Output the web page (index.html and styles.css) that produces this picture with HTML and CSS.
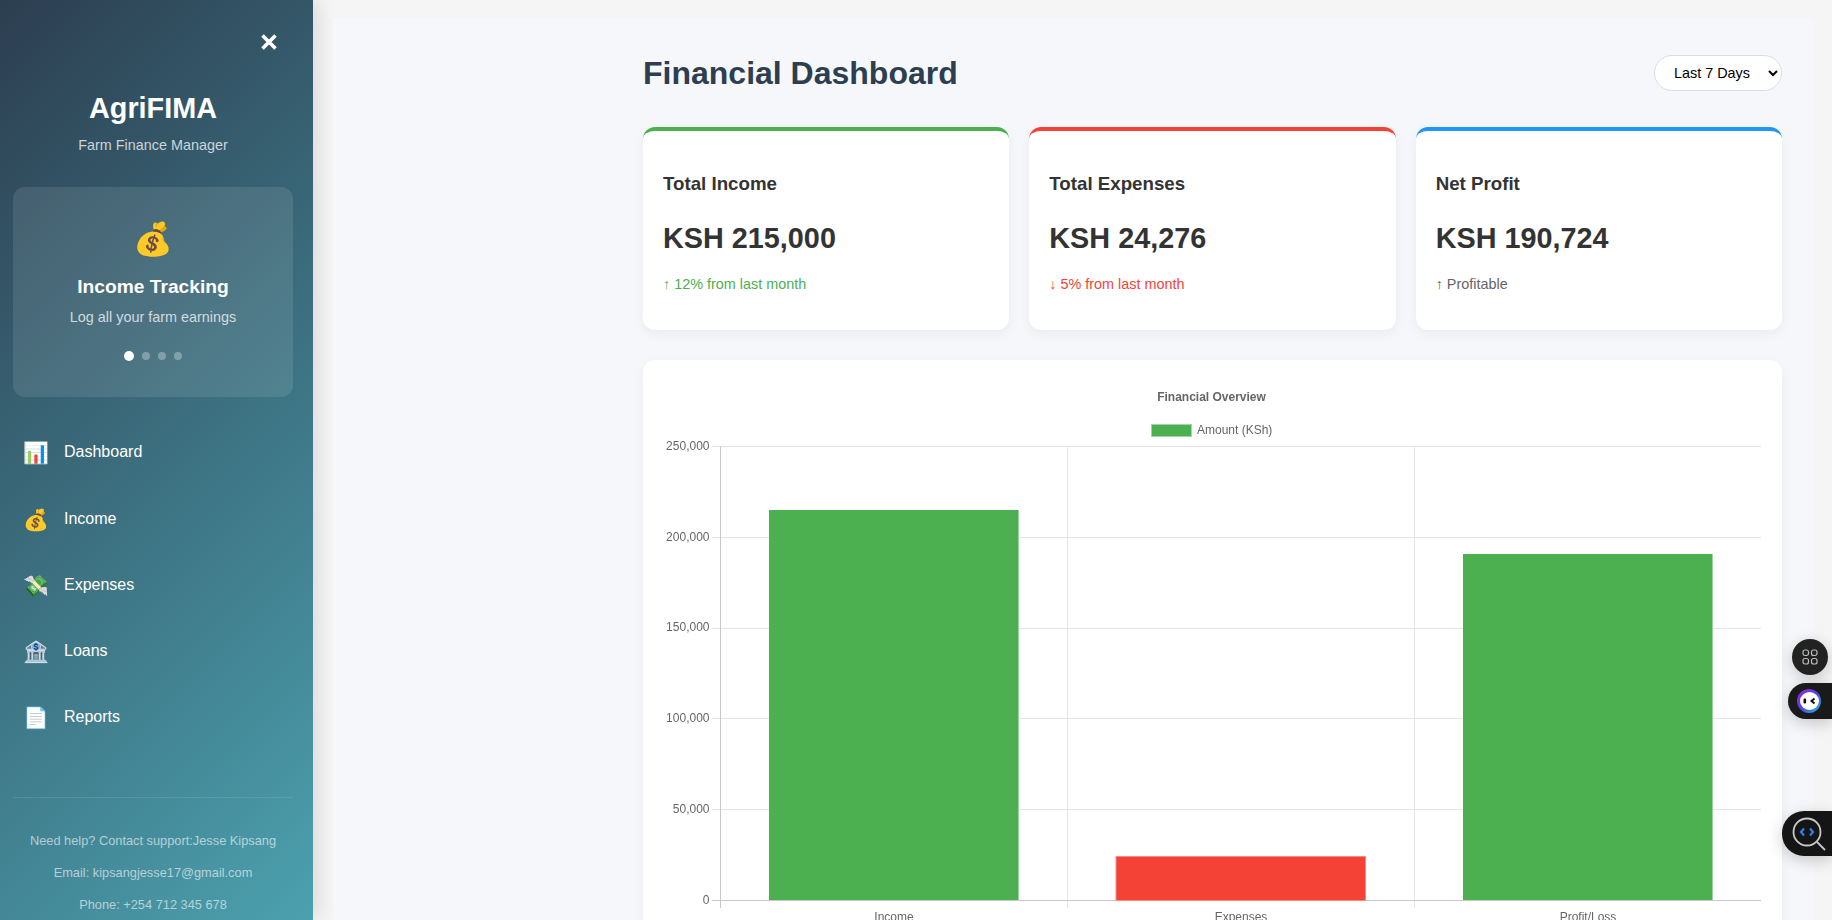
FILE: index.html
```html
<!DOCTYPE html>
<html lang="en">
<head>
<meta charset="utf-8">
<title>AgriFIMA</title>
<link rel="stylesheet" href="styles.css">
</head>
<body>
<div class="app">
  <aside class="sidebar">
    <div class="close-row"><svg class="close" width="16" height="16" viewBox="0 0 16 16"><path d="M1.5 1.5L14.5 14.5M14.5 1.5L1.5 14.5"/></svg></div>
    <header class="brand">
      <h1>AgriFIMA</h1>
      <p>Farm Finance Manager</p>
    </header>
    <section class="promo">
      <div class="promo-icon">💰</div>
      <h3>Income Tracking</h3>
      <p>Log all your farm earnings</p>
      <div class="dots"><span class="dot on"></span><span class="dot"></span><span class="dot"></span><span class="dot"></span></div>
    </section>
    <nav class="nav">
      <a class="nav-item"><span class="nav-icon">📊</span><span>Dashboard</span></a>
      <a class="nav-item"><span class="nav-icon">💰</span><span>Income</span></a>
      <a class="nav-item"><span class="nav-icon">💸</span><span>Expenses</span></a>
      <a class="nav-item"><span class="nav-icon">🏦</span><span>Loans</span></a>
      <a class="nav-item"><span class="nav-icon">📄</span><span>Reports</span></a>
    </nav>
    <footer class="side-foot">
      <p>Need help? Contact support:Jesse Kipsang</p>
      <p>Email: kipsangjesse17@gmail.com</p>
      <p>Phone: +254 712 345 678</p>
    </footer>
  </aside>
  <main class="panel">
    <div class="head">
      <h2>Financial Dashboard</h2>
      <select class="range"><option>Last 7 Days</option></select>
    </div>
    <div class="cards">
      <article class="card c-green"><h4>Total Income</h4><div class="amount">KSH 215,000</div><div class="delta up">↑ 12% from last month</div></article>
      <article class="card c-red"><h4>Total Expenses</h4><div class="amount">KSH 24,276</div><div class="delta down">↓ 5% from last month</div></article>
      <article class="card c-blue"><h4>Net Profit</h4><div class="amount">KSH 190,724</div><div class="delta flat">↑ Profitable</div></article>
    </div>
    <section class="chart-card">
      <svg class="chart" width="1139" height="560" viewBox="643 360 1139 560">
        <text class="ch-title" x="1211.5" y="401">Financial Overview</text>
        <rect class="swatch" x="1151.5" y="424.5" width="40" height="12"/>
        <text class="ch-legend" x="1197" y="434">Amount (KSh)</text>
        <g class="grid">
          <path d="M712 446.5H1761M712 537.5H1761M712 628.5H1761M712 718.5H1761M712 809.5H1761"/>
          <path d="M1067.5 446V908M1414.5 446V908"/>
        </g>
        <g class="axis"><path d="M720.5 446V908M712 900.5H1761"/></g>
        <rect class="bar-g" x="769" y="510" width="250" height="390"/>
        <path class="edge-g" d="M1018.5 510V900"/>
        <rect class="bar-r" x="1116" y="856.5" width="249.5" height="44"/>
        <rect class="bar-g" x="1463" y="554" width="250" height="346"/>
        <path class="edge-g" d="M1712.5 554V900"/>
        <g class="ch-y">
          <text x="709.5" y="450">250,000</text>
          <text x="709.5" y="541">200,000</text>
          <text x="709.5" y="631">150,000</text>
          <text x="709.5" y="722">100,000</text>
          <text x="709.5" y="813">50,000</text>
          <text x="709.5" y="904">0</text>
        </g>
        <g class="ch-x">
          <text x="894" y="921">Income</text>
          <text x="1241" y="921">Expenses</text>
          <text x="1588" y="921">Profit/Loss</text>
        </g>
      </svg>
    </section>
  </main>
</div>
<div class="float f-apps">
  <svg width="16" height="16" viewBox="0 0 16 16" fill="none" stroke="#bdbdbd" stroke-width="1.2"><rect x="1" y="1" width="5.5" height="5.5" rx="2"/><rect x="9.5" y="1" width="5.5" height="5.5" rx="2"/><rect x="1" y="9.5" width="5.5" height="5.5" rx="2"/><rect x="9.5" y="9.5" width="5.5" height="5.5" rx="2"/></svg>
</div>
<div class="float f-bot">
  <svg width="24" height="24" viewBox="0 0 24 24"><defs><linearGradient id="bot" x1="0" y1="0" x2="1" y2="1"><stop offset="0" stop-color="#a020e0"/><stop offset=".5" stop-color="#4f46e5"/><stop offset="1" stop-color="#1fc0e0"/></linearGradient></defs><circle cx="12" cy="12" r="12" fill="url(#bot)"/><ellipse cx="12.5" cy="12" rx="9.5" ry="9" fill="#fff"/><rect x="6.5" y="9.5" width="2.6" height="5" rx="1" fill="#111"/><path d="M17.5 9.5L14.5 12L17.5 14.5" fill="none" stroke="#111" stroke-width="2"/></svg>
</div>
<div class="float f-code">
  <svg width="36" height="36" viewBox="0 0 36 36" fill="none"><circle cx="15" cy="16" r="13.5" stroke="#c8c8c8" stroke-width="1.8"/><path d="M25 26L33 34" stroke="#c8c8c8" stroke-width="1.8"/><path d="M12 12.5L9 16L12 19.5" stroke="#2f80ed" stroke-width="2.2"/><path d="M18 12.5L21 16L18 19.5" stroke="#2f80ed" stroke-width="2.2"/></svg>
</div>
</body>
</html>
```
FILE: styles.css
```css
* { box-sizing: border-box; }
html, body { margin: 0; height: 100%; overflow: hidden; }
body { background: #f5f5f5; font-family: "Liberation Sans", Arial, sans-serif; color: #333; }
.app { display: flex; height: 920px; }
.sidebar {
  width: 313px; height: 920px; flex: none; overflow: hidden; position: relative;
  padding: 0 20px 0 13px; color: #fff;
  background: linear-gradient(135deg, #2c3e50, #4ca1af);
  box-shadow: 4px 0 20px rgba(0,0,0,.12);
  display: flex; flex-direction: column;
}
.sidebar > * { flex: none; }
.close-row { height: 84px; display: flex; justify-content: flex-end; align-items: flex-start; padding: 34px 16px 0 0; }
.close { stroke: #fff; stroke-width: 3.6; fill: none; }
.brand { text-align: center; }
.brand h1 { margin: 6px 0 0; font-size: 28.8px; line-height: 36px; font-weight: 700; }
.brand p { margin: 10px 0 0; font-size: 14.4px; line-height: 18px; color: rgba(255,255,255,.75); }
.promo {
  margin-top: 33px; height: 210px; border-radius: 12px; background: rgba(255,255,255,.1);
  text-align: center; padding-top: 32px;
}
.promo-icon { font-size: 32px; line-height: 40px; }
.promo h3 { margin: 16px 0 0; font-size: 19.2px; line-height: 24px; font-weight: 700; }
.promo p { margin: 9px 0 0; font-size: 14.4px; line-height: 18px; color: rgba(255,255,255,.75); }
.dots { display: flex; justify-content: center; align-items: center; gap: 8px; margin-top: 25px; }
.dot { width: 8px; height: 8px; border-radius: 50%; background: rgba(255,255,255,.3); }
.dot.on { width: 10px; height: 10px; background: #fff; }
.nav { margin-top: 22.3px; display: flex; flex-direction: column; }
.nav-item { height: 66.2px; display: flex; align-items: center; font-size: 16px; padding-left: 10px; }
.nav-icon { width: 41px; font-size: 20.8px; line-height: 24px; flex: none; padding-top: 2px; }
.side-foot { margin-top: 46.7px; border-top: 1px solid rgba(255,255,255,.1); text-align: center; padding-top: 35px; }
.side-foot p { margin: 0 0 17px; font-size: 12.8px; line-height: 15px; color: rgba(255,255,255,.6); }
.panel { position: relative; margin: 18px 19px 0 20px; width: 1480px; flex: none; background: #f5f7fb; padding: 37px 31px 0 310px; }
.head { display: flex; justify-content: space-between; align-items: center; height: 36px; }
.head h2 { margin: 0; font-size: 32px; line-height: 36px; font-weight: 700; color: #2c3e50; }
.range {
  width: 128px; height: 36px; padding: 0 0 0 15px; border: 1px solid #ddd; border-radius: 20px;
  background: #fff; font-family: inherit; font-size: 14.4px; color: #000;
}
.cards { display: grid; grid-template-columns: repeat(3, 1fr); gap: 20px; margin-top: 36px; }
.card { height: 203px; background: #fff; border-radius: 12px; padding: 41px 20px 0; box-shadow: 0 4px 12px rgba(0,0,0,.05); border-top: 4px solid; }
.c-green { border-top-color: #4caf50; }
.c-red { border-top-color: #f44336; }
.c-blue { border-top-color: #2196f3; }
.card h4 { margin: 0; font-size: 18.72px; line-height: 24px; font-weight: 700; color: #333; }
.amount { margin-top: 23px; font-size: 28.8px; line-height: 38px; font-weight: 700; color: #333; }
.delta { margin-top: 18px; font-size: 14.4px; line-height: 18px; }
.up { color: #4caf50; }
.down { color: #f44336; }
.flat { color: #666; }
.chart-card { margin-top: 30px; height: 600px; background: #fff; border-radius: 12px; box-shadow: 0 4px 12px rgba(0,0,0,.05); overflow: hidden; }
.chart { display: block; font-family: "Liberation Sans", Arial, sans-serif; will-change: transform; }
.ch-title { font-size: 12px; font-weight: 700; fill: #666; text-anchor: middle; }
.ch-legend { font-size: 12px; fill: #666; }
.swatch { fill: #4caf50; stroke: #a5d6a7; stroke-width: 1; }
.grid path { stroke: #e5e5e5; stroke-width: 1; fill: none; }
.axis path { stroke: #c9c9c9; stroke-width: 1; fill: none; }
.bar-g { fill: #4caf50; }
.edge-g { stroke: #9dd3a0; stroke-width: 1; fill: none; }
.bar-r { fill: #f44336; stroke: #f98b83; stroke-width: 1; }
.ch-y text { font-size: 12px; fill: #666; text-anchor: end; }
.ch-x text { font-size: 12px; fill: #666; text-anchor: middle; }
.float { position: absolute; background: #1a1a1a; display: flex; align-items: center; box-shadow: 0 4px 16px rgba(0,0,0,.2); }
.f-apps { left: 1792px; top: 639px; width: 36px; height: 36px; border-radius: 50%; justify-content: center; background: #222; }
.f-bot { left: 1788px; top: 683px; width: 44px; height: 36px; border-radius: 18px 0 0 18px; padding-left: 9px; }
.f-code { left: 1782px; top: 811px; width: 50px; height: 45px; border-radius: 22px 0 0 22px; padding-left: 10px; background: #151515; }
```
